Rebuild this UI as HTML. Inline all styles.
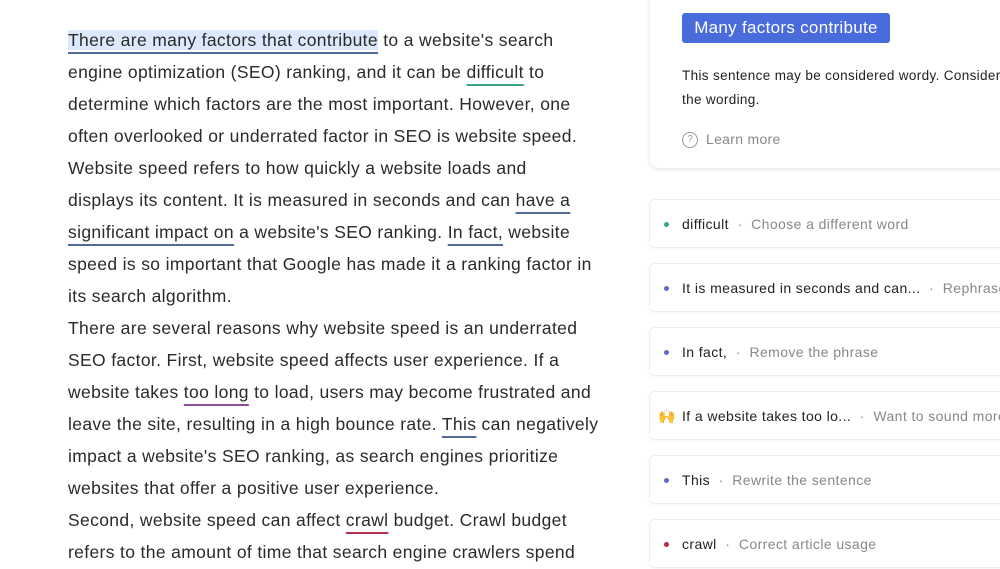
<!DOCTYPE html>
<html><head><meta charset="utf-8"><style>
body{margin:0;width:1000px;height:560px;overflow:hidden;background:#fff;font-family:"Liberation Sans",sans-serif;position:relative}
.l{position:absolute;left:68px;height:32px;line-height:33px;font-size:17.5px;letter-spacing:0.35px;color:#2a2a2a;white-space:nowrap}
.u{text-decoration:underline;text-decoration-thickness:2px;text-underline-offset:6px}
.b{text-decoration-color:#51699b}.g{text-decoration-color:#3aa48a}.p{text-decoration-color:#8a4f96}.r{text-decoration-color:#b8324f}
.hl{background:#dce8fb}
.top{position:absolute;left:650px;top:-10px;width:380px;height:178px;background:#fff;border-radius:8px;box-shadow:0 1px 5px rgba(0,0,0,.12)}
.btn{position:absolute;left:682px;top:13px;width:208px;height:30px;background:#4a6bdc;border-radius:3px;color:#fff;font-size:17px;letter-spacing:0.3px;line-height:30px;text-align:center}
.desc{position:absolute;left:682px;top:64px;font-size:13.5px;letter-spacing:0.35px;line-height:24px;color:#222;white-space:nowrap}
.lm{position:absolute;left:706px;top:131px;font-size:14px;letter-spacing:0.3px;color:#888}
.q{position:absolute;left:682px;top:132px;width:14px;height:14px;border:1.3px solid #999;border-radius:50%;font-size:10px;line-height:14px;text-align:center;color:#999}
.c{position:absolute;left:650px;width:380px;height:47px;background:#fff;border-radius:5px;box-shadow:0 0 0 1px #eee,0 1px 3px rgba(0,0,0,.08);font-size:14px;letter-spacing:0.4px;line-height:48px;white-space:nowrap;color:#222}
.c .d{position:absolute;left:14px;top:22px;width:5px;height:5px;border-radius:50%}
.c .t{position:absolute;left:32px}
.c .s{color:#888}
</style></head><body>
<div class="l" style="top:24px"><span class="hl u b">There are many factors that contribute</span> to a website's search</div>
<div class="l" style="top:56px">engine optimization (SEO) ranking, and it can be <span class="u g">difficult</span> to</div>
<div class="l" style="top:88px">determine which factors are the most important. However, one</div>
<div class="l" style="top:120px">often overlooked or underrated factor in SEO is website speed.</div>
<div class="l" style="top:152px">Website speed refers to how quickly a website loads and</div>
<div class="l" style="top:184px">displays its content. It is measured in seconds and can <span class="u b">have a</span></div>
<div class="l" style="top:216px"><span class="u b">significant impact on</span> a website's SEO ranking. <span class="u b">In fact,</span> website</div>
<div class="l" style="top:248px">speed is so important that Google has made it a ranking factor in</div>
<div class="l" style="top:280px">its search algorithm.</div>
<div class="l" style="top:312px">There are several reasons why website speed is an underrated</div>
<div class="l" style="top:344px">SEO factor. First, website speed affects user experience. If a</div>
<div class="l" style="top:376px">website takes <span class="u p">too long</span> to load, users may become frustrated and</div>
<div class="l" style="top:408px">leave the site, resulting in a high bounce rate. <span class="u b">This</span> can negatively</div>
<div class="l" style="top:440px">impact a website's SEO ranking, as search engines prioritize</div>
<div class="l" style="top:472px">websites that offer a positive user experience.</div>
<div class="l" style="top:504px">Second, website speed can affect <span class="u r">crawl</span> budget. Crawl budget</div>
<div class="l" style="top:536px">refers to the amount of time that search engine crawlers spend</div>

<div class="top"></div>
<div class="btn">Many factors contribute</div>
<div class="desc">This sentence may be considered wordy. Consider<br>the wording.</div>
<div class="q">?</div><div class="lm">Learn more</div>

<div class="c" style="top:200px"><span class="d" style="background:#3aa48a"></span><span class="t">difficult <span class="s">&nbsp;·&nbsp; Choose a different word</span></span></div>
<div class="c" style="top:264px"><span class="d" style="background:#5a6fc0"></span><span class="t">It is measured in seconds and can... <span class="s">&nbsp;·&nbsp; Rephrase</span></span></div>
<div class="c" style="top:328px"><span class="d" style="background:#5a6fc0"></span><span class="t">In fact, <span class="s">&nbsp;·&nbsp; Remove the phrase</span></span></div>
<div class="c" style="top:392px"><span style="position:absolute;left:8px;font-size:14px;color:#e8a020">🙌</span><span class="t">If a website takes too lo... <span class="s">&nbsp;·&nbsp; Want to sound more</span></span></div>
<div class="c" style="top:456px"><span class="d" style="background:#5a6fc0"></span><span class="t">This <span class="s">&nbsp;·&nbsp; Rewrite the sentence</span></span></div>
<div class="c" style="top:520px"><span class="d" style="background:#c0283f"></span><span class="t">crawl <span class="s">&nbsp;·&nbsp; Correct article usage</span></span></div>
</body></html>
